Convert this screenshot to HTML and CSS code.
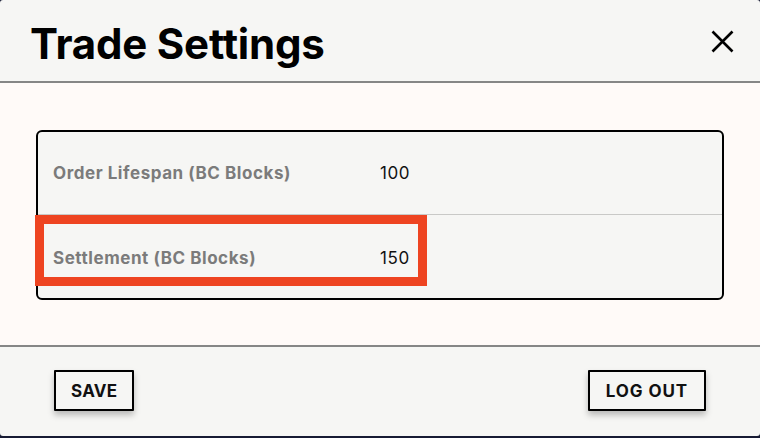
FILE: index.html
```html
<!DOCTYPE html>
<html>
<head>
<meta charset="utf-8">
<link rel="stylesheet" href="styles.css">
</head>
<body>
<div class="modal">
  <header class="modal-header">
    <h1 class="title">Trade Settings</h1>
    <button class="close" aria-label="Close">
      <svg width="23" height="23" viewBox="0 0 23 23"><path d="M1.5 1.5 L21.5 21.5 M21.5 1.5 L1.5 21.5" stroke="#000" stroke-width="2.6" fill="none"/></svg>
    </button>
  </header>
  <main class="modal-body">
    <div class="card">
      <div class="row">
        <span class="label">Order Lifespan (BC Blocks)</span>
        <span class="value">100</span>
      </div>
      <div class="row row-last">
        <span class="label">Settlement (BC Blocks)</span>
        <span class="value">150</span>
        <div class="highlight"></div>
      </div>
    </div>
  </main>
  <footer class="modal-footer">
    <button class="btn">SAVE</button>
    <button class="btn btn-wide">LOG OUT</button>
  </footer>
</div>
</body>
</html>
```
FILE: styles.css
```css
html, body {
  margin: 0;
  padding: 0;
  background: #171b33;
}
body {
  width: 760px;
  height: 438px;
  font-family: "Inter", "Liberation Sans", sans-serif;
}
.modal {
  width: 760px;
  height: 436px;
  border-radius: 3px;
  overflow: hidden;
  display: flex;
  flex-direction: column;
  background: #f6f6f4;
}
.modal-header {
  height: 81px;
  border-bottom: 2px solid #868686;
  display: flex;
  align-items: center;
  justify-content: space-between;
  padding: 0 26px 0 30px;
  box-sizing: content-box;
}
.title {
  margin: 0;
  font-family: "Inter", sans-serif;
  font-weight: 700;
  font-size: 42px;
  letter-spacing: -0.2px;
  color: #000;
  padding-top: 6px;
}
.close {
  background: none;
  border: 0;
  padding: 0;
  margin-top: 2px;
  display: flex;
}
.modal-body {
  height: 264px;
  background: #fffaf8;
  border-bottom: 2px solid #868686;
  padding: 47px 36px 0 36px;
  box-sizing: border-box;
}
.card {
  border: 2px solid #000;
  border-radius: 6px;
  background: #f6f6f4;
  height: 170px;
  box-sizing: border-box;
}
.row {
  position: relative;
  height: 83px;
  display: flex;
  align-items: center;
  padding-left: 15px;
  padding-top: 0;
  box-sizing: border-box;
  border-bottom: 1px solid #c9c9c7;
}
.row-last {
  border-bottom: 0;
  padding-top: 2px;
  padding-bottom: 0;
}
.label {
  width: 327px;
  font-weight: 700;
  font-size: 17px;
  color: #7b7b7b;
  letter-spacing: 0.55px;
}
.value {
  font-size: 17px;
  color: #111;
  letter-spacing: 0.6px;
}
.highlight {
  position: absolute;
  left: -3px;
  top: 0;
  width: 392px;
  height: 71px;
  border: 9px solid #ee4421;
  box-sizing: border-box;
}
.modal-footer {
  flex: 1;
  display: flex;
  align-items: flex-start;
  justify-content: space-between;
  padding: 23px 54px 0 54px;
}
.btn {
  height: 41px;
  padding: 0 15px;
  border: 2px solid #000;
  background: #f6f6f4;
  font-family: "Inter", sans-serif;
  font-weight: 700;
  font-size: 17px;
  letter-spacing: 0.3px;
  color: #111;
  box-shadow: 0 4px 6px rgba(0,0,0,0.25);
  border-radius: 1px;
}
.btn-wide {
  letter-spacing: 0.9px;
  padding: 0 16px;
}
```
